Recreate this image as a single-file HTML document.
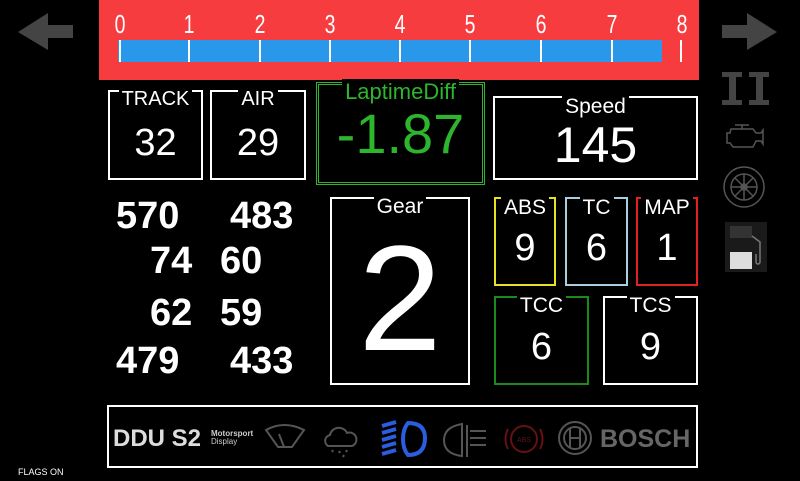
<!DOCTYPE html>
<html><head><meta charset="utf-8"><style>
body{margin:0;width:800px;height:481px;background:#000;overflow:hidden;position:relative;font-family:"Liberation Sans",sans-serif;color:#fff}
.a{position:absolute}
.box{position:absolute;border:2px solid #fff;box-sizing:border-box}
.lbl{position:absolute;left:0;right:0;top:-3px;text-align:center;line-height:20px}
.lbl span{background:#000;padding:0 3px}
.val{position:absolute;left:0;right:0;text-align:center}
.n{position:absolute;font-weight:bold;font-size:38px;line-height:38px}
.tk{position:absolute;top:10px;font-size:26px;line-height:28px;width:20px;margin-left:-10px;text-align:center;transform:scaleX(.75)}
.tl{position:absolute;top:40px;width:2px;height:22px;background:#fff}
</style></head><body>
<svg class="a" style="left:0;top:0" width="800" height="481">
<polygon points="18,32 48,13 48,25 73,25 73,38 48,38 48,50" fill="#444"/>
<polygon points="777,32 747,13 747,25 722,25 722,38 747,38 747,50" fill="#444"/>
<g fill="#444">
<rect x="722" y="72" width="20" height="5"/><rect x="729" y="72" width="7" height="33"/><rect x="722" y="100" width="20" height="5"/>
<rect x="749" y="72" width="20" height="5"/><rect x="756" y="72" width="7" height="33"/><rect x="749" y="100" width="20" height="5"/>
</g>
<g fill="none" stroke="#555" stroke-width="1.5">
<path d="M735,125 h14 M742,125 v4 M731,129 h22 l3,4 h5 l2,-3 v14 l-2,-3 h-5 l-3,6 h-20 l-3,-4 h-3 v-10 h3 z"/>
<circle cx="744" cy="187" r="20"/><circle cx="744" cy="187" r="13"/><circle cx="744" cy="187" r="3"/>
<path d="M744,174v26M731,187h26M735,178l18,18M753,178l-18,18"/>
</g>
<rect x="725" y="222" width="42" height="50" fill="#1a1a1a"/>
<rect x="730" y="226" width="22" height="12" fill="#333"/>
<rect x="730" y="252" width="22" height="17" fill="#ddd"/>
<path d="M752,236 l8,6 v20 a2,2 0 0 1 -4,0 v-8" fill="none" stroke="#777" stroke-width="1.5"/>
<g fill="none" stroke="#555" stroke-width="2">
<path d="M266,430 q18,-10 38,0 l-12,17 h-14 z"/><path d="M279,434 l5,13"/>
<path d="M328,446 a6,6 0 0 1 2,-11 a9,9 0 0 1 17,-2 a6,6 0 0 1 5,13 z"/>
<path d="M333,450 l-1,2 M340,451 l-1,2 M347,450 l-1,2 M344,455 l-1,2"/>
<path d="M462,424 q-18,3 -18,16 q0,14 18,16 z"/><path d="M467,425v32M470,431h16M470,438h16M470,445h16"/>
</g>
<g fill="none" stroke="#2a5de0" stroke-width="4">
<path d="M408,423 q17,0 17,15 q0,17 -17,17 q-5,-6 -5,-16 q0,-10 5,-16 z"/>
<path d="M382,426l14,-4M382,433l14,-4M382,440l14,-4M382,447l14,-4M382,454l14,-4"/>
</g>
<g fill="none" stroke="#661111" stroke-width="2"><circle cx="524" cy="439" r="13"/><path d="M508,429 q-5,10 0,20 M540,429 q5,10 0,20"/></g>
<text x="524" y="442" font-size="7" fill="#661111" text-anchor="middle" font-family="Liberation Sans">ABS</text>
<g fill="none" stroke="#555" stroke-width="2"><circle cx="575" cy="438" r="16"/><circle cx="575" cy="438" r="11"/><path d="M570,428v20M580,428v20M570,438h10"/></g>
</svg>
<div class="a" style="left:99px;top:0;width:600px;height:80px;background:#f63c3e"></div>
<div class="a" style="left:118px;top:40px;width:544px;height:22px;background:#2a98ea"></div>
<div class="tl" style="left:119px"></div><div class="tl" style="left:188px"></div><div class="tl" style="left:259px"></div><div class="tl" style="left:329px"></div><div class="tl" style="left:399px"></div><div class="tl" style="left:469px"></div><div class="tl" style="left:540px"></div><div class="tl" style="left:611px"></div><div class="tl" style="left:680px"></div>
<div class="tk" style="left:120px">0</div><div class="tk" style="left:189px">1</div><div class="tk" style="left:260px">2</div><div class="tk" style="left:330px">3</div><div class="tk" style="left:400px">4</div><div class="tk" style="left:470px">5</div><div class="tk" style="left:541px">6</div><div class="tk" style="left:612px">7</div><div class="tk" style="left:682px">8</div>

<div class="box" style="left:108px;top:90px;width:95px;height:90px"><div class="lbl" style="font-size:20px"><span>TRACK</span></div><div class="val" style="top:30px;font-size:38px">32</div></div>
<div class="box" style="left:210px;top:90px;width:96px;height:90px"><div class="lbl" style="font-size:20px"><span>AIR</span></div><div class="val" style="top:30px;font-size:38px">29</div></div>
<div class="box" style="left:316px;top:82px;width:169px;height:103px;border:3px double #2db52d"><div class="lbl" style="font-size:22px;color:#2db52d;top:-3px"><span>LaptimeDiff</span></div><div class="val" style="top:16px;font-size:56px;color:#2db52d">-1.87</div></div>
<div class="box" style="left:493px;top:96px;width:205px;height:84px"><div class="lbl" style="font-size:21px;top:-1px"><span>Speed</span></div><div class="val" style="top:18px;font-size:50px">145</div></div>

<div class="n" style="left:116px;top:197px">570</div><div class="n" style="left:230px;top:197px">483</div>
<div class="n" style="left:150px;top:242px">74</div><div class="n" style="left:220px;top:242px">60</div>
<div class="n" style="left:150px;top:294px">62</div><div class="n" style="left:220px;top:294px">59</div>
<div class="n" style="left:116px;top:342px">479</div><div class="n" style="left:230px;top:342px">433</div>

<div class="box" style="left:330px;top:197px;width:140px;height:188px"><div class="lbl" style="font-size:21px;top:-2px"><span>Gear</span></div><div class="val" style="top:14px;font-size:150px;line-height:170px">2</div></div>
<div class="box" style="left:494px;top:197px;width:62px;height:89px;border-color:#e8e020"><div class="lbl" style="font-size:21px;top:-1px"><span>ABS</span></div><div class="val" style="top:28px;font-size:38px">9</div></div>
<div class="box" style="left:565px;top:197px;width:63px;height:89px;border-color:#a8cce0"><div class="lbl" style="font-size:21px;top:-1px"><span>TC</span></div><div class="val" style="top:28px;font-size:38px">6</div></div>
<div class="box" style="left:636px;top:197px;width:62px;height:89px;border-color:#e52020"><div class="lbl" style="font-size:21px;top:-1px"><span>MAP</span></div><div class="val" style="top:28px;font-size:38px">1</div></div>
<div class="box" style="left:494px;top:296px;width:95px;height:89px;border-color:#1a8a1a"><div class="lbl" style="font-size:21px;top:-2px"><span>TCC</span></div><div class="val" style="top:28px;font-size:38px">6</div></div>
<div class="box" style="left:603px;top:296px;width:95px;height:89px"><div class="lbl" style="font-size:21px;top:-2px"><span>TCS</span></div><div class="val" style="top:28px;font-size:38px">9</div></div>

<div class="box" style="left:107px;top:405px;width:591px;height:63px"></div>
<div class="a" style="left:113px;top:425px;font-weight:bold;font-size:24px;color:#ddd">DDU S2</div>
<div class="a" style="left:211px;top:430px;font-size:8px;line-height:8px;font-weight:bold;color:#ccc">Motorsport<br><span style="font-weight:normal">Display</span></div>
<div class="a" style="left:600px;top:425px;font-weight:bold;font-size:25px;color:#666">BOSCH</div>
<div class="a" style="left:18px;top:467px;font-size:9px">FLAGS ON</div>
</body></html>
